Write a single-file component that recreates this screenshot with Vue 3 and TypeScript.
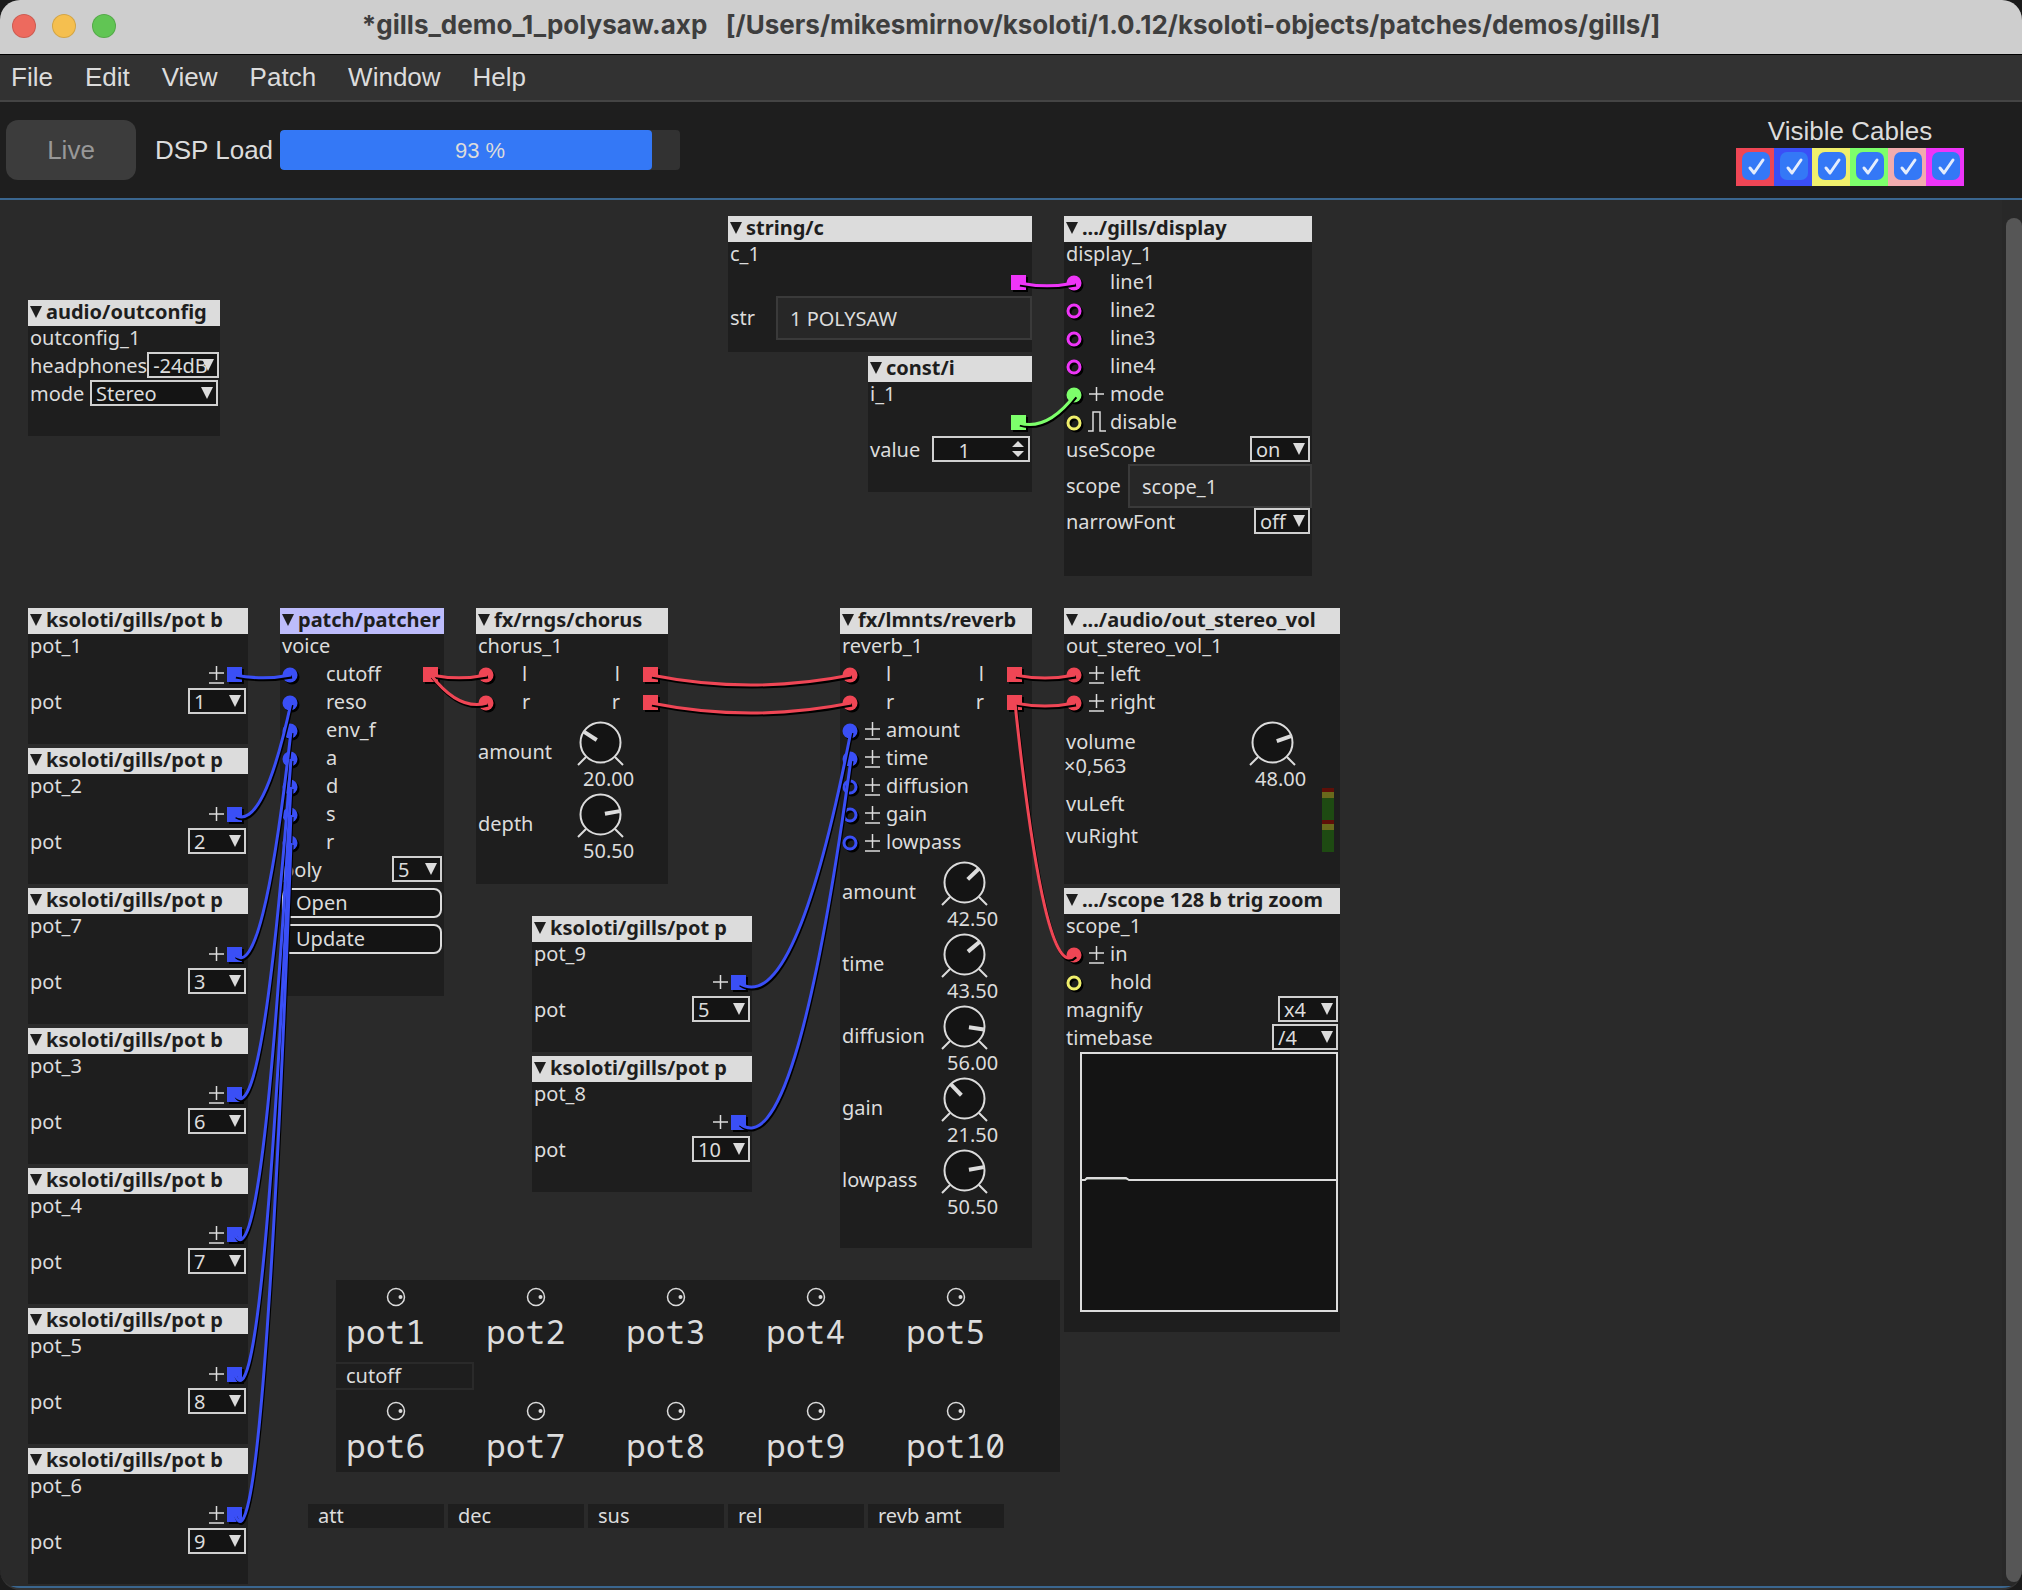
<script setup lang="ts">
type Sign = 'bi' | 'uni' | 'pulse' | ''
type Color = 'red' | 'blue' | 'yellow' | 'green' | 'pink' | 'magenta'

interface Port {
  label?: string
  sign?: Sign
  color: Color
  open?: boolean
}

type Row =
  | { kind: 'ports'; inlet?: Port; outlet?: Port }
  | { kind: 'select'; label: string; value: string; size: string }
  | { kind: 'field'; label: string; value: string; size: string }
  | { kind: 'spin'; label: string; value: number }
  | { kind: 'dial'; label: string; value: string; angle: number; note?: string }
  | { kind: 'button'; label: string }
  | { kind: 'vu'; label: string }
  | { kind: 'scope' }

interface PatchNode {
  title: string
  name: string
  x: number
  y: number
  w: number
  h: number
  selected?: boolean
  roomy?: boolean
  rows: Row[]
}

const colors: Record<Color, string> = {
  red: '#ef4655',
  blue: '#3a4ff6',
  yellow: '#f0ef6c',
  green: '#7dff6b',
  pink: '#f1acae',
  magenta: '#ee35f8',
}
const cableKinds: Color[] = ['red', 'blue', 'yellow', 'green', 'pink', 'magenta']
const menus = ['File', 'Edit', 'View', 'Patch', 'Window', 'Help']
const dspLoad = 93

function pot(name: string, bipolar: boolean, value: string, x: number, y: number): PatchNode {
  return {
    title: 'ksoloti/gills/pot ' + (bipolar ? 'b' : 'p'),
    name, x, y, w: 220, h: 136,
    rows: [
      { kind: 'ports', outlet: { sign: bipolar ? 'bi' : 'uni', color: 'blue' } },
      { kind: 'select', label: 'pot', value, size: 'm' },
    ],
  }
}
function inlet(label: string, color: Color, sign: Sign = '', open = false): Row {
  return { kind: 'ports', inlet: { label, color, sign, open } }
}
function stereo(label: string): Row {
  return { kind: 'ports', inlet: { label, color: 'red' }, outlet: { label, color: 'red' } }
}

const nodes: PatchNode[] = [
  {
    title: 'audio/outconfig', name: 'outconfig_1', x: 28, y: 100, w: 192, h: 136,
    rows: [
      { kind: 'select', label: 'headphones', value: '-24dB', size: 'xl' },
      { kind: 'select', label: 'mode', value: 'Stereo', size: 'xxl' },
    ],
  },
  {
    title: 'string/c', name: 'c_1', x: 728, y: 16, w: 304, h: 136,
    rows: [
      { kind: 'ports', outlet: { color: 'magenta' } },
      { kind: 'field', label: 'str', value: '1 POLYSAW', size: 'wide' },
    ],
  },
  {
    title: 'const/i', name: 'i_1', x: 868, y: 156, w: 164, h: 136,
    rows: [
      { kind: 'ports', outlet: { color: 'green' } },
      { kind: 'spin', label: 'value', value: 1 },
    ],
  },
  {
    title: '.../gills/display', name: 'display_1', x: 1064, y: 16, w: 248, h: 360,
    rows: [
      inlet('line1', 'magenta'),
      inlet('line2', 'magenta', '', true),
      inlet('line3', 'magenta', '', true),
      inlet('line4', 'magenta', '', true),
      inlet('mode', 'green', 'uni'),
      inlet('disable', 'yellow', 'pulse', true),
      { kind: 'select', label: 'useScope', value: 'on', size: 'ml' },
      { kind: 'field', label: 'scope', value: 'scope_1', size: 'narrow' },
      { kind: 'select', label: 'narrowFont', value: 'off', size: 's' },
    ],
  },
  pot('pot_1', true, '1', 28, 408),
  pot('pot_2', false, '2', 28, 548),
  pot('pot_7', false, '3', 28, 688),
  pot('pot_3', true, '6', 28, 828),
  pot('pot_4', true, '7', 28, 968),
  pot('pot_5', false, '8', 28, 1108),
  pot('pot_6', true, '9', 28, 1248),
  pot('pot_9', false, '5', 532, 716),
  pot('pot_8', false, '10', 532, 856),
  {
    title: 'patch/patcher', name: 'voice', x: 280, y: 408, w: 164, h: 388, selected: true,
    rows: [
      { kind: 'ports', inlet: { label: 'cutoff', color: 'blue' }, outlet: { color: 'red' } },
      inlet('reso', 'blue'),
      inlet('env_f', 'blue'),
      inlet('a', 'blue'),
      inlet('d', 'blue'),
      inlet('s', 'blue'),
      inlet('r', 'blue'),
      { kind: 'select', label: 'poly', value: '5', size: 'xs' },
      { kind: 'button', label: 'Open' },
      { kind: 'button', label: 'Update' },
    ],
  },
  {
    title: 'fx/rngs/chorus', name: 'chorus_1', x: 476, y: 408, w: 192, h: 276, roomy: true,
    rows: [
      stereo('l'),
      stereo('r'),
      { kind: 'dial', label: 'amount', value: '20.00', angle: -57 },
      { kind: 'dial', label: 'depth', value: '50.50', angle: 80 },
    ],
  },
  {
    title: 'fx/lmnts/reverb', name: 'reverb_1', x: 840, y: 408, w: 192, h: 640, roomy: true,
    rows: [
      stereo('l'),
      stereo('r'),
      inlet('amount', 'blue', 'bi'),
      inlet('time', 'blue', 'bi'),
      inlet('diffusion', 'blue', 'bi', true),
      inlet('gain', 'blue', 'bi', true),
      inlet('lowpass', 'blue', 'bi', true),
      { kind: 'dial', label: 'amount', value: '42.50', angle: 46 },
      { kind: 'dial', label: 'time', value: '43.50', angle: 50 },
      { kind: 'dial', label: 'diffusion', value: '56.00', angle: 99 },
      { kind: 'dial', label: 'gain', value: '21.50', angle: -44 },
      { kind: 'dial', label: 'lowpass', value: '50.50', angle: 80 },
    ],
  },
  {
    title: '.../audio/out_stereo_vol', name: 'out_stereo_vol_1', x: 1064, y: 408, w: 276, h: 276,
    rows: [
      inlet('left', 'red', 'bi'),
      inlet('right', 'red', 'bi'),
      { kind: 'dial', label: 'volume', value: '48.00', angle: 71, note: '×0,563' },
      { kind: 'vu', label: 'vuLeft' },
      { kind: 'vu', label: 'vuRight' },
    ],
  },
  {
    title: '.../scope 128 b trig zoom', name: 'scope_1', x: 1064, y: 688, w: 276, h: 444,
    rows: [
      inlet('in', 'red', 'bi'),
      inlet('hold', 'yellow', '', true),
      { kind: 'select', label: 'magnify', value: 'x4', size: 'ml' },
      { kind: 'select', label: 'timebase', value: '/4', size: 'l' },
      { kind: 'scope' },
    ],
  },
]

interface Cable {
  color: Color
  from: [number, number]
  to: [number, number]
}
const cables: Cable[] = [
  { color: 'magenta', from: [1019, 83], to: [1075, 83] },
  { color: 'green', from: [1019, 223], to: [1075, 195] },
  { color: 'blue', from: [235, 475], to: [291, 475] },
  { color: 'blue', from: [235, 615], to: [291, 503] },
  { color: 'blue', from: [235, 755], to: [291, 531] },
  { color: 'blue', from: [235, 895], to: [291, 559] },
  { color: 'blue', from: [235, 1035], to: [291, 587] },
  { color: 'blue', from: [235, 1175], to: [291, 615] },
  { color: 'blue', from: [235, 1315], to: [291, 643] },
  { color: 'red', from: [431, 475], to: [487, 475] },
  { color: 'red', from: [431, 475], to: [487, 503] },
  { color: 'red', from: [651, 475], to: [851, 475] },
  { color: 'red', from: [651, 503], to: [851, 503] },
  { color: 'blue', from: [739, 783], to: [851, 531] },
  { color: 'blue', from: [739, 923], to: [851, 559] },
  { color: 'red', from: [1015, 475], to: [1075, 475] },
  { color: 'red', from: [1015, 503], to: [1075, 503] },
  { color: 'red', from: [1015, 503], to: [1075, 755] },
]

// A cable hangs below its lower end in proportion to the distance it spans.
function sag({ from: [x1, y1], to: [x2, y2] }: Cable): string {
  const drop = (Math.abs(x2 - x1) + Math.abs(y2 - y1)) / 10
  return `M${x1} ${y1}Q${(x1 + x2) / 2} ${Math.max(y1, y2) + drop} ${x2} ${y2}`
}

const upperPots = ['pot1', 'pot2', 'pot3', 'pot4', 'pot5']
const lowerPots = ['pot6', 'pot7', 'pot8', 'pot9', 'pot10']
const notes = ['att', 'dec', 'sus', 'rel', 'revb amt']
</script>

<template>
  <div class="window">
    <header class="titlebar">
      <div class="lights">
        <button class="light close" aria-label="Close"></button>
        <button class="light minimise" aria-label="Minimise"></button>
        <button class="light zoom" aria-label="Zoom"></button>
      </div>
      <h1 class="title">*gills_demo_1_polysaw.axp&nbsp;&nbsp; [/Users/mikesmirnov/ksoloti/1.0.12/ksoloti-objects/patches/demos/gills/]</h1>
    </header>

    <nav class="menubar">
      <button v-for="m in menus" :key="m" class="menu">{{ m }}</button>
    </nav>

    <div class="toolbar">
      <button class="live" disabled>Live</button>
      <span class="dsp-label">DSP Load</span>
      <div class="dsp" role="progressbar" aria-label="DSP Load" :aria-valuenow="dspLoad">
        <div class="dsp-fill" :style="{ width: dspLoad + '%' }"></div>
        <span class="dsp-text">{{ dspLoad }} %</span>
      </div>
      <div class="cables-box">
        <span class="cables-title">Visible Cables</span>
        <div class="cable-checks">
          <label v-for="c in cableKinds" :key="c" class="cable-check" :class="'bg-' + c">
            <input type="checkbox" checked :aria-label="c + ' cables'" />
            <svg class="tick" viewBox="0 0 28 28"><path d="M8 16L12 21L21 8" /></svg>
          </label>
        </div>
      </div>
    </div>

    <main class="canvas">
      <section
        v-for="(n, ni) in nodes"
        :key="n.name"
        class="node"
        :class="{ selected: n.selected, roomy: n.roomy }"
        :style="{ left: n.x + 'px', top: n.y + 'px', width: n.w + 'px', minHeight: n.h + 'px' }"
      >
        <h2 class="node-title">
          <svg class="fold" viewBox="0 0 12 12"><path d="M0 0H12L6 12Z" /></svg>{{ n.title }}
        </h2>
        <div class="node-name">{{ n.name }}</div>

        <template v-for="(r, ri) in n.rows" :key="ri">
          <div v-if="r.kind === 'ports'" class="row ports">
            <div v-if="r.inlet" class="inlet">
              <svg class="port" viewBox="0 0 18 18">
                <template v-if="r.inlet.open">
                  <circle cx="10" cy="10" r="6" class="ring-shadow" />
                  <circle cx="8" cy="8" r="6" class="ring" :stroke="colors[r.inlet.color]" />
                </template>
                <template v-else>
                  <circle cx="10" cy="10" r="7.5" />
                  <circle cx="8" cy="8" r="7.5" :fill="colors[r.inlet.color]" />
                </template>
              </svg>
              <svg class="sign" viewBox="0 0 18 22">
                <path v-if="r.inlet.sign === 'bi'" d="M1 10H16M8.5 3V17M1 20H16" />
                <path v-if="r.inlet.sign === 'uni'" d="M1 11H16M8.5 4V18" />
                <path v-if="r.inlet.sign === 'pulse'" d="M0 20H5V1H12V20H18" />
              </svg>
              <span>{{ r.inlet.label }}</span>
            </div>
            <div v-if="r.outlet" class="outlet" :class="{ labelled: r.outlet.label }">
              <span v-if="r.outlet.label">{{ r.outlet.label }}</span>
              <svg v-if="r.outlet.sign" class="sign" viewBox="0 0 18 22">
                <path v-if="r.outlet.sign === 'bi'" d="M0 10H15M7.5 3V17M0 20H15" />
                <path v-else d="M0 11H15M7.5 4V18" />
              </svg>
              <svg class="port" viewBox="0 0 18 18">
                <path d="M2 2H17V17H2Z" />
                <path d="M0 0H15V15H0Z" :fill="colors[r.outlet.color]" />
              </svg>
            </div>
          </div>

          <div v-else-if="r.kind === 'select'" class="row">
            <label :for="`f${ni}-${ri}`">{{ r.label }}</label>
            <div class="drop" :class="'w-' + r.size">
              <select :id="`f${ni}-${ri}`"><option>{{ r.value }}</option></select>
              <svg class="arrow" viewBox="0 0 12 12"><path d="M0 0H12L6 12Z" /></svg>
            </div>
          </div>

          <div v-else-if="r.kind === 'field'" class="row field">
            <label :for="`f${ni}-${ri}`">{{ r.label }}</label>
            <input :id="`f${ni}-${ri}`" type="text" :value="r.value" :class="r.size" />
          </div>

          <div v-else-if="r.kind === 'spin'" class="row">
            <label :for="`f${ni}-${ri}`">{{ r.label }}</label>
            <div class="drop w-spin">
              <input :id="`f${ni}-${ri}`" type="number" :value="r.value" />
              <svg class="arrow spin" viewBox="0 0 12 16"><path d="M6 0L12 6H0ZM0 10H12L6 16Z" /></svg>
            </div>
          </div>

          <div v-else-if="r.kind === 'dial'" class="row dial-row">
            <div class="dial-label" :class="{ noted: r.note }">
              <span>{{ r.label }}</span>
              <span v-if="r.note" class="note-value">{{ r.note }}</span>
            </div>
            <div class="dial">
              <svg viewBox="0 0 48 50">
                <path d="M9 41L1 49M38 41L46 49" class="stop" />
                <circle cx="23.5" cy="26.5" r="20" />
                <path d="M23.5 22V7" class="hand" :transform="`rotate(${r.angle} 23.5 26.5)`" />
              </svg>
              <span class="dial-value">{{ r.value }}</span>
            </div>
          </div>

          <button v-else-if="r.kind === 'button'" class="node-button">{{ r.label }}</button>

          <div v-else-if="r.kind === 'vu'" class="row vu-row">
            <span>{{ r.label }}</span>
            <div class="vu"><i class="clip"></i><i class="warn"></i><i class="ok"></i></div>
          </div>

          <div v-else class="scope">
            <svg viewBox="0 0 254 256" preserveAspectRatio="none">
              <path d="M4 126L6 124H45L47 126Z" class="bump" />
              <path d="M0 126H3L5 124H44L47 126H254" class="trace" />
            </svg>
          </div>
        </template>
      </section>

      <section class="panel">
        <div class="pots">
          <div v-for="p in upperPots" :key="p" class="pot">
            <svg viewBox="0 0 20 20"><circle cx="10" cy="10" r="8.5" /><circle cx="14.5" cy="10" r="2" class="dot" /></svg>
            <span>{{ p }}</span>
          </div>
        </div>
        <div class="strip"><div class="comment">cutoff</div></div>
        <div class="pots">
          <div v-for="p in lowerPots" :key="p" class="pot">
            <svg viewBox="0 0 20 20"><circle cx="10" cy="10" r="8.5" /><circle cx="14.5" cy="10" r="2" class="dot" /></svg>
            <span>{{ p }}</span>
          </div>
        </div>
      </section>

      <div class="notes">
        <div v-for="t in notes" :key="t" class="comment">{{ t }}</div>
      </div>

      <svg class="wires">
        <g v-for="(c, i) in cables" :key="i">
          <path :d="sag(c)" stroke="#000" transform="translate(1 2)" />
          <path :d="sag(c)" :stroke="colors[c.color]" />
        </g>
      </svg>

      <div class="scrollbar"><div class="thumb"></div></div>
    </main>
  </div>
</template>

<style>
body {
  margin: 0;
  background: #1b1b1b;
}
</style>

<style scoped>
* {
  box-sizing: border-box;
}
.window {
  display: flex;
  flex-direction: column;
  min-width: 1400px;
  min-height: 100vh;
  overflow: hidden;
  border-bottom: 2px solid #333;
  border-radius: 20px;
  background: #2a2a2a;
  color: #dcdcdc;
  font-family: "Liberation Sans", Arial, sans-serif;
  font-size: 26px;
}
button,
input,
select {
  margin: 0;
  padding: 0;
  border: 0;
  outline: 0;
  background: none;
  color: inherit;
  font: inherit;
}

.titlebar {
  position: relative;
  display: flex;
  justify-content: center;
  align-items: center;
  height: 55px;
  padding-bottom: 4px;
  border-bottom: 1px solid #000;
  background: #cecece;
}
.lights {
  position: absolute;
  left: 12px;
  top: 14px;
  display: flex;
  gap: 16px;
}
.light {
  width: 24px;
  height: 24px;
  border: 1px solid #0002;
  border-radius: 50%;
}
.close {
  background: #ed6a5e;
}
.minimise {
  background: #f5bf4f;
}
.zoom {
  background: #61c554;
}
.title {
  margin: 0;
  color: #3e3e3e;
  font-family: Inter, "Liberation Sans", sans-serif;
  font-size: 26px;
  font-weight: 700;
  line-height: 30px;
  white-space: nowrap;
}

.menubar {
  display: flex;
  gap: 32px;
  align-items: center;
  height: 47px;
  padding: 0 11px;
  border-bottom: 2px solid #444;
  background: #323232;
}

.toolbar {
  display: flex;
  align-items: center;
  height: 98px;
  padding: 0 58px 0 6px;
  border-bottom: 2px solid #3a668f;
  background: #1e1e1e;
}
.live {
  width: 130px;
  height: 60px;
  border-radius: 12px;
  background: #3c3c3c;
  color: #989898;
}
.dsp-label {
  width: 144px;
  padding-left: 19px;
  white-space: nowrap;
}
.dsp {
  position: relative;
  display: flex;
  width: 400px;
  height: 40px;
  overflow: hidden;
  border-radius: 4px;
  background: #323232;
}
.dsp-fill {
  border-radius: 4px;
  background: #3478f6;
}
.dsp-text {
  position: absolute;
  inset: 0;
  font-size: 22px;
  line-height: 42px;
  text-align: center;
}
.cables-box {
  display: flex;
  flex-direction: column;
  align-items: center;
  margin-left: auto;
}
.cables-title {
  line-height: 34px;
}
.cable-checks {
  display: flex;
}
.cable-check {
  position: relative;
  width: 38px;
  height: 38px;
  padding: 4px 0 0 6px;
}
.cable-check input {
  display: block;
  width: 28px;
  height: 28px;
  border-radius: 7px;
  appearance: none;
  background: #3478f6;
}
.tick {
  position: absolute;
  left: 6px;
  top: 4px;
  width: 28px;
  height: 28px;
  fill: none;
  stroke: #e4edfd;
  stroke-width: 3;
  stroke-linecap: round;
  stroke-linejoin: round;
  pointer-events: none;
}
.bg-red {
  background: #ef4655;
}
.bg-blue {
  background: #3a4ff6;
}
.bg-yellow {
  background: #f0ef6c;
}
.bg-green {
  background: #7dff6b;
}
.bg-pink {
  background: #f1acae;
}
.bg-magenta {
  background: #ee35f8;
}

.canvas {
  position: relative;
  flex: 1;
  min-height: 1384px;
  border-bottom: 2px solid #3a668f;
  font-family: "Noto Sans", sans-serif;
  font-size: 20px;
}
.node {
  position: absolute;
  background: #1e1e1e;
  line-height: 26px;
}
.node-title {
  display: flex;
  gap: 4px;
  height: 26px;
  margin: 0;
  padding-left: 2px;
  background: #dcdcdc;
  color: #1e1e1e;
  font-size: 20px;
  font-weight: 700;
  line-height: 24px;
  white-space: nowrap;
}
.selected .node-title {
  background: #bdbcfb;
}
.fold {
  flex: none;
  width: 12px;
  height: 12px;
  margin-top: 6px;
  fill: #1e1e1e;
}
.node-name {
  height: 26px;
  padding-left: 2px;
  line-height: 24px;
}
.row {
  display: flex;
  justify-content: space-between;
  align-items: center;
  height: 28px;
  padding: 0 2px;
}
.inlet,
.outlet {
  display: flex;
  align-items: center;
}
.outlet {
  margin-left: auto;
  padding-right: 1px;
}
.roomy .outlet {
  padding-right: 5px;
}
.labelled span {
  margin-right: 23px;
}
.port {
  width: 18px;
  height: 18px;
  margin-top: 3px;
}
.ring {
  fill: none;
  stroke-width: 3;
}
.ring-shadow {
  fill: none;
  stroke: #000;
  stroke-width: 3;
}
.sign {
  width: 18px;
  height: 22px;
  fill: none;
  stroke: #dcdcdc;
  stroke-width: 1.5;
}
.inlet .sign {
  margin: 0 4px;
}

.drop {
  position: relative;
  align-self: flex-start;
  flex: none;
  height: 26px;
}
.drop select,
.drop input {
  display: block;
  width: 100%;
  height: 26px;
  padding: 2px 0 0 4px;
  border: 2px solid #d0d0d0;
  border-radius: 0;
  appearance: none;
  background: #141414;
  line-height: 20px;
}
.drop input {
  padding: 2px 58px 0 0;
  text-align: right;
  appearance: textfield;
}
.drop input::-webkit-inner-spin-button {
  appearance: none;
}
.arrow {
  position: absolute;
  right: 5px;
  top: 7px;
  width: 12px;
  height: 12px;
  fill: #dcdcdc;
  pointer-events: none;
}
.arrow.spin {
  top: 5px;
  right: 6px;
  height: 16px;
}
.w-xs {
  width: 50px;
}
.w-s {
  width: 56px;
}
.w-m {
  width: 58px;
}
.w-ml {
  width: 60px;
}
.w-l {
  width: 66px;
}
.w-xl {
  width: 72px;
}
.w-xxl {
  width: 128px;
}
.w-spin {
  width: 98px;
}

.field {
  height: 44px;
  padding-right: 0;
}
.field input {
  height: 44px;
  padding-left: 12px;
  border: 2px solid #3a3a3a;
  background: #272727;
}
.wide {
  width: 256px;
}
.narrow {
  width: 184px;
}

.dial-row {
  height: 72px;
}
.dial-label {
  display: flex;
  flex-direction: column;
  line-height: 24px;
}
.noted {
  padding-top: 4px;
}
.note-value {
  margin-left: -2px;
}
.dial {
  display: flex;
  flex-direction: column;
  align-items: flex-start;
  width: 89px;
  height: 72px;
}
.dial svg {
  flex: none;
  width: 48px;
  height: 50px;
}
.dial circle {
  fill: #141414;
  stroke: #dcdcdc;
  stroke-width: 2;
}
.stop {
  stroke: #dcdcdc;
  stroke-width: 2;
}
.hand {
  stroke: #dcdcdc;
  stroke-width: 4;
}
.dial-value {
  padding-left: 6px;
  line-height: 26px;
}

.node-button {
  display: block;
  width: calc(100% - 4px);
  height: 30px;
  margin: 4px 2px 6px;
  padding-left: 12px;
  border: 2px solid #dcdcdc;
  border-radius: 8px;
  background: #141414;
  line-height: 24px;
  text-align: left;
}

.vu-row {
  height: 32px;
  padding-right: 6px;
}
.vu {
  display: flex;
  flex-direction: column;
  width: 12px;
  height: 32px;
}
.clip {
  height: 4px;
  background: #5e0f08;
}
.warn {
  height: 6px;
  background: #69691c;
}
.ok {
  height: 22px;
  background: #1e4a12;
}
.scope {
  height: 260px;
  margin: 0 2px 20px 16px;
  border: 2px solid #dcdcdc;
  background: #141414;
}
.scope svg {
  display: block;
  width: 100%;
  height: 256px;
}
.trace {
  fill: none;
  stroke: #dcdcdc;
  stroke-width: 2;
}
.bump {
  fill: #6c726c;
}

.panel {
  position: absolute;
  left: 336px;
  top: 1080px;
  width: 724px;
  background: #1e1e1e;
}
.pots {
  display: flex;
  height: 78px;
}
.pot {
  display: flex;
  flex-direction: column;
  width: 140px;
  padding: 7px 0 0 10px;
  font-family: "Noto Sans Mono", "DejaVu Sans Mono", monospace;
  font-size: 33px;
  line-height: 36px;
}
.pot svg {
  width: 20px;
  height: 20px;
  margin: 0 0 7px 40px;
  fill: none;
  stroke: #dcdcdc;
  stroke-width: 1.5;
}
.pot .dot {
  fill: #dcdcdc;
  stroke: none;
}
.strip {
  height: 36px;
  padding-top: 4px;
}
.comment {
  width: 136px;
  height: 24px;
  padding-left: 10px;
  background: #1e1e1e;
  line-height: 24px;
}
.strip .comment {
  width: 138px;
  height: 28px;
  border: solid #2a2a2a;
  border-width: 2px 2px 2px 0;
}
.notes {
  position: absolute;
  left: 308px;
  top: 1304px;
  display: flex;
  gap: 4px;
}

.wires {
  position: absolute;
  inset: 0;
  width: 100%;
  height: 100%;
  fill: none;
  stroke-width: 3;
  pointer-events: none;
}
.scrollbar {
  position: absolute;
  top: 0;
  right: 0;
  bottom: 0;
  width: 20px;
  padding: 18px 0 4px 4px;
  background: #282828;
}
.thumb {
  height: 100%;
  border-radius: 8px;
  background: #565656;
}
</style>
